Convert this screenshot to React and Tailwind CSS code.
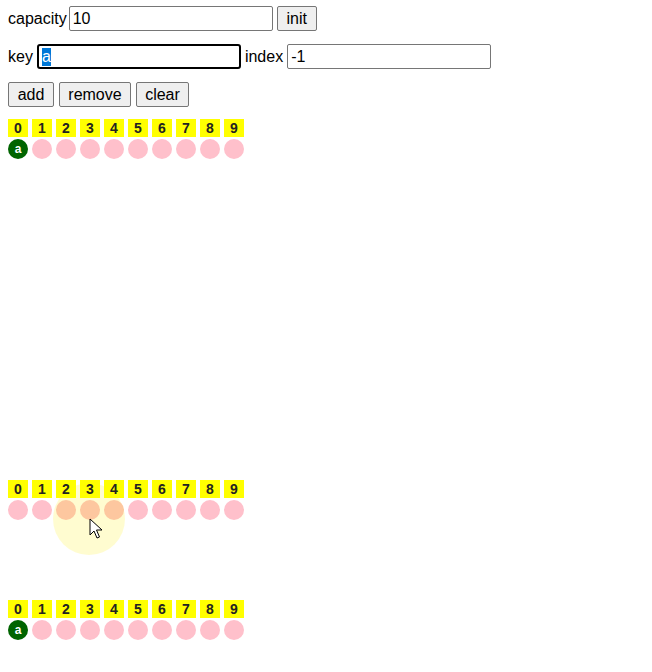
import React from 'react';

const CELLS = [0, 1, 2, 3, 4, 5, 6, 7, 8, 9];

function Field({ value, w, focused, selected }) {
  return (
    <div
      className={`h-[25px] flex items-center pl-[3px] bg-white ${w} ${
        focused ? 'border-2 border-black rounded-[3px] pl-[2px]' : 'border border-[#767676] rounded-[2px]'
      }`}
    >
      {selected ? (
        <span className="bg-[#0078d7] text-white leading-[18px]">{value}</span>
      ) : (
        <span className="leading-[18px]">{value}</span>
      )}
    </div>
  );
}

function Btn({ label, w }) {
  return (
    <div
      className={`h-[25px] flex items-center justify-center bg-[#efefef] border border-[#767676] rounded-[2px] ${w}`}
    >
      {label}
    </div>
  );
}

function Table({ filled, hot = [] }) {
  return (
    <div className="flex flex-col gap-[2px]">
      <div className="flex gap-[4px]">
        {CELLS.map(i => (
          <div
            key={i}
            className="w-[20px] h-[18px] bg-[#ffff00] flex items-center justify-center text-[14px] font-bold text-[#222]"
          >
            {i}
          </div>
        ))}
      </div>
      <div className="flex gap-[4px]">
        {CELLS.map(i => {
          const has = filled && filled[i];
          const bg = has ? 'bg-[#006400]' : hot.includes(i) ? 'bg-[#fdc79f]' : 'bg-[#ffc0cb]';
          return (
            <div
              key={i}
              className={`w-[20px] h-[20px] rounded-full flex items-center justify-center text-white text-[12px] font-bold ${bg}`}
            >
              {has || ''}
            </div>
          );
        })}
      </div>
    </div>
  );
}

export default function App() {
  return (
    <div
      className="w-[652px] h-[672px] bg-white text-[16px] text-black px-2 pt-[6px]"
      style={{ fontFamily: '"Liberation Sans", Arial, sans-serif' }}
    >
      {/* controls */}
      <div className="flex items-center gap-[2px] h-[25px]">
        <span>capacity</span>
        <Field value="10" w="w-[204px]" />
        <div className="ml-[2px]">
          <Btn label="init" w="w-[40px]" />
        </div>
      </div>
      <div className="flex items-center gap-[4px] h-[25px] mt-[13px]">
        <span>key</span>
        <Field value="a" w="w-[204px]" focused selected />
        <span>index</span>
        <Field value="-1" w="w-[204px]" />
      </div>
      <div className="flex items-center gap-[5px] h-[25px] mt-[13px]">
        <Btn label="add" w="w-[46px]" />
        <Btn label="remove" w="w-[72px]" />
        <Btn label="clear" w="w-[53px]" />
      </div>

      {/* tables */}
      <div className="mt-[12px]">
        <Table filled={{ 0: 'a' }} />
      </div>

      <div className="mt-[321px] relative">
        <div className="absolute left-[45px] top-[3px] w-[72px] h-[72px] rounded-full bg-[#fffbc4] opacity-80" />
        <div className="relative">
          <Table hot={[2, 3, 4]} />
        </div>
        <svg className="absolute left-[81px] top-[38px]" width="14" height="22" viewBox="0 0 14 22">
          <path d="M1 1 L1 17 L5 13 L8 20 L10.5 19 L7.5 12 L13 12 Z" fill="white" stroke="black" strokeWidth="1" strokeLinejoin="round" />
        </svg>
      </div>

      <div className="mt-[80px]">
        <Table filled={{ 0: 'a' }} />
      </div>
    </div>
  );
}
